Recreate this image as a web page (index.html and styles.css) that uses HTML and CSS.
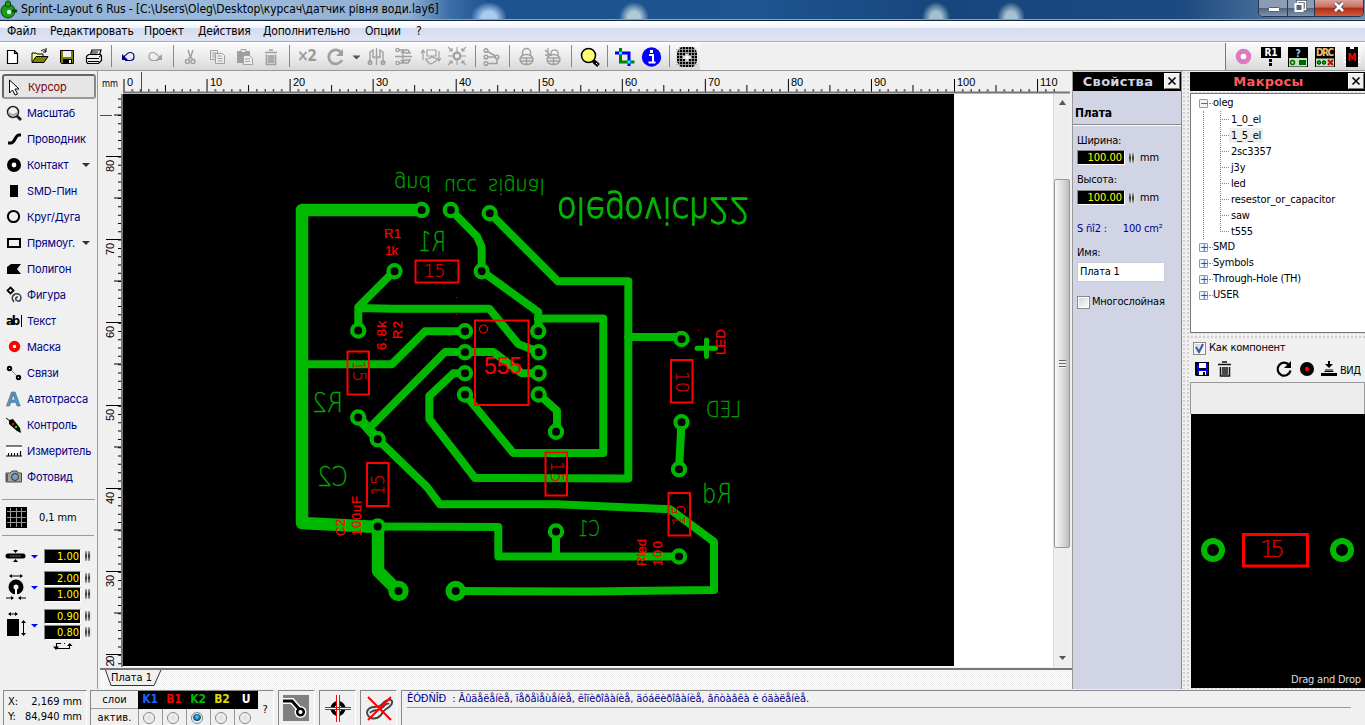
FILE: index.html
```html
<!DOCTYPE html>
<html lang="ru">
<head>
<meta charset="utf-8">
<title>Sprint-Layout 6 Rus</title>
<link rel="stylesheet" href="styles.css">
</head>
<body>
<div class="app">
  <header class="titlebar">
    <svg class="appicon" width="18" height="19" viewBox="0 0 18 19"><circle cx="8" cy="11" r="7" fill="#1c9a1c" stroke="#064806"/><rect x="5.500" y="1" width="5" height="6" rx="2" fill="#1c9a1c" stroke="#064806"/><circle cx="9" cy="12" r="2.200" fill="#dff5df"/><path d="M12 11h5" stroke="#064806" stroke-width="3"/></svg>
    <span class="title">Sprint-Layout 6 Rus - [C:\Users\Oleg\Desktop\курсач\датчик рівня води.lay6]</span>
    <div class="winbtns">
      <div class="wb min"><svg width="28" height="16"><rect x="9.500" y="7.500" width="11" height="4" rx="1" fill="#fff" stroke="#56606e"/></svg></div>
      <div class="wb max"><svg width="26" height="16"><rect x="9.500" y="1.500" width="8" height="8" fill="none" stroke="#4b5566" stroke-width="3"/><rect x="9.500" y="1.500" width="8" height="8" fill="none" stroke="#fff" stroke-width="1.500"/><rect x="7.500" y="4" width="7" height="7" fill="#56647a" stroke="#fff" stroke-width="2"/></svg></div>
      <div class="wb close"><svg width="48" height="16"><path d="M20 3l8 8M28 3l-8 8" stroke="#47404a" stroke-width="4.500"/><path d="M20 3l8 8M28 3l-8 8" stroke="#fff" stroke-width="2.600"/></svg></div>
    </div>
  </header>
  <nav class="menubar">
    <span class="m1">Файл</span><span class="m2">Редактировать</span><span class="m3">Проект</span><span class="m4">Действия</span><span class="m5">Дополнительно</span><span class="m6">Опции</span><span class="m7">?</span>
  </nav>
  <div class="toolbar">
    <div class="tools-a">
      <svg class="ic" viewBox="0 0 27 27"><path d="M8.500 7.500h7l3 3v10h-10zM15.500 7.500v3h3" fill="#fff" stroke="#000" stroke-width="1.200"/></svg>
      <svg class="ic" viewBox="0 0 27 27"><path d="M6 19V10h4l1 1h6v3" fill="#ffff80" stroke="#000"/><path d="M6 19.500l4-6h12l-4 6z" fill="#808000" stroke="#000"/><path d="M15 8q3-3 5 0m0-3v4h-3" fill="none" stroke="#000"/></svg>
      <svg class="ic" viewBox="0 0 27 27"><path d="M7.500 7.500h13v13h-12l-1-1z" fill="#808000" stroke="#000"/><rect x="10" y="8" width="8" height="6" fill="#eee"/><rect x="10" y="16" width="9" height="5"/><rect x="16" y="17" width="2" height="3" fill="#eee"/></svg>
      <svg class="ic" viewBox="0 0 27 27"><path d="M10 13l2-6h9l-2 6" fill="#fff" stroke="#000" stroke-width="1.200"/><path d="M6.500 13.500l2-2h12l1 2v4l-3 3h-11l-1-2z" fill="#eee" stroke="#000" stroke-width="1.200"/><path d="M7 15.500h12M8 18.500h11M12 9h6M11.500 11h6M19 14l3-2" stroke="#000"/></svg>
      <i class="sep"></i>
      <svg class="ic" viewBox="0 0 27 27"><path d="M11 18h5q4 0 4-4t-4-4q-2 0-7 5" fill="none" stroke="#000080" stroke-width="1.200" transform="translate(-1 -.5)"/><path d="M7 11v6h6z" fill="#000080"/></svg>
      <svg class="ic dis" viewBox="0 0 27 27"><path d="M16 17.500h-5q-4 0-4-4t4-4q2 0 7 5" fill="none" stroke="currentColor" stroke-width="1.200"/><path d="M20 11v6h-6z" fill="currentColor"/></svg>
      <i class="sep"></i>
      <svg class="ic dis" viewBox="0 0 27 27"><path d="M11 7l2 6 3 4M16 7l-2 6-3 4" fill="none" stroke="currentColor" stroke-width="1.500"/><circle cx="10.500" cy="18.500" r="2" fill="none" stroke="currentColor" stroke-width="1.500"/><circle cx="16" cy="18.500" r="2" fill="none" stroke="currentColor" stroke-width="1.500"/></svg>
      <svg class="ic dis" viewBox="0 0 27 27"><path d="M6.500 7.500h7v9h-7zM8 10h4M8 12h3M8 14h3" fill="#eee" stroke="currentColor"/><path d="M11.500 10.500h7l2 2v8h-9zM13.500 13h4M13.500 15.500h5M13.500 18h5" fill="#eee" stroke="currentColor"/></svg>
      <svg class="ic dis" viewBox="0 0 27 27"><path d="M6 8h13v12H6z" fill="currentColor"/><path d="M10 6.500h5v3h-5z" fill="#eee" stroke="currentColor"/><path d="M12.500 12.500h6l3 3v6h-9zM14 16h5M14 18.500h5" fill="#eee" stroke="currentColor"/></svg>
      <svg class="ic dis" viewBox="0 0 27 27"><path d="M7 9.500h12M11 7h4M8.500 11.500v10h9v-10M11 12v8M13 12v8M15 12v8" fill="none" stroke="currentColor" stroke-width="1.700"/></svg>
      <i class="sep"></i>
      <span class="ic x2">×2</span>
      <svg class="ic rot dis" viewBox="0 0 30 27"><path d="M21.500 10a7 7 0 1 0 .5 7" fill="none" stroke="currentColor" stroke-width="2.800"/><path d="M23 6v7h-7z" fill="currentColor"/></svg>
      <svg class="caret" viewBox="0 0 13 27"><path d="M2.500 12.500h8l-4 4z" fill="#555"/></svg>
      <svg class="ic dis" viewBox="0 0 27 27"><path d="M13.500 5v17M7 20V9l3-2v7l2 1M20 20V9l-3-2v7l-2 1" fill="none" stroke="currentColor" stroke-width="1.400"/><circle cx="7" cy="19.500" r="1.800" fill="none" stroke="currentColor" stroke-width="1.500"/><circle cx="20" cy="19.500" r="1.800" fill="none" stroke="currentColor" stroke-width="1.500"/><path d="M9 14h9" stroke="currentColor"/></svg>
      <svg class="ic dis" viewBox="0 0 27 27"><path d="M5 13.500h17M8 7h10l2 3h-5M8 20h10l2-3h-5M13 8v11M11 10l2-2 2 2M11 17l2 2 2-2" fill="none" stroke="currentColor" stroke-width="1.400"/><circle cx="7.500" cy="7" r="1.600" fill="#eee" stroke="currentColor" stroke-width="1.400"/><circle cx="7.500" cy="20" r="1.600" fill="#eee" stroke="currentColor" stroke-width="1.400"/></svg>
      <svg class="ic dis" viewBox="0 0 27 27"><path d="M6 17V8M4 10l2-3 2 3M10 7h9v6h-9zM8 16h3l4-2 5 2M9 17l4 4 3-1 4-3M22 8v9M20 15l2 3 2-3" fill="none" stroke="currentColor" stroke-width="1.200"/></svg>
      <svg class="ic dis" viewBox="0 0 27 27"><circle cx="13" cy="13" r="3.400" fill="none" stroke="currentColor" stroke-width="2.200"/><path d="M13 4v5M13 17v5M4 13h5M17 13h5M4 4l4 4M22 4l-4 4M4 22l4-4M22 22l-4-4M5 8h3V5M18 5v3h3M5 18h3v3M18 21v-3h3" fill="none" stroke="currentColor" stroke-width="1.100"/></svg>
      <i class="sep s7"></i>
      <svg class="ic dis" viewBox="0 0 27 27"><path d="M8 7.500l11 6.500M8 14h11v6.500H8" fill="none" stroke="currentColor" stroke-width="1.500"/><g fill="#eee" stroke="currentColor" stroke-width="1.500"><circle cx="8" cy="7.500" r="1.800"/><circle cx="8" cy="14" r="1.800"/><circle cx="19" cy="14" r="1.800"/><circle cx="8" cy="20.500" r="1.800"/></g></svg>
      <i class="sep"></i>
      <svg class="ic dis" viewBox="0 0 27 27"><path d="M9.500 13V9.500a4 4 0 0 1 8 0V13" fill="none" stroke="currentColor" stroke-width="1.500"/><ellipse cx="13.500" cy="16.500" rx="6.500" ry="5" fill="none" stroke="currentColor" stroke-width="1.500"/><path d="M7 15h13M8 18h11M13.500 15v6" stroke="currentColor" stroke-width="1.500"/></svg>
      <svg class="ic dis" viewBox="0 0 27 27"><path d="M11 12V9a4 4 0 0 1 7 0v4M5 7l5 5M5 12h7M8 5v10" fill="none" stroke="currentColor" stroke-width="1.300"/><ellipse cx="13.500" cy="16.500" rx="6.500" ry="5" fill="none" stroke="currentColor" stroke-width="1.500"/><path d="M7 15h13M8 18h11M13.500 15v6" stroke="currentColor" stroke-width="1.500"/></svg>
      <i class="sep s9"></i>
      <svg class="ic" viewBox="0 0 27 27"><circle cx="12.500" cy="12.500" r="7" fill="#ffff70" stroke="#000" stroke-width="1.500"/><path d="M17.500 18l5 4.500" stroke="#000" stroke-width="4"/><path d="M20 20l1.500 1.500" stroke="#fff"/></svg>
      <i class="sep"></i>
      <svg class="ic" viewBox="0 0 27 27"><path d="M9 4v14h14" fill="none" stroke="#008000" stroke-width="3" transform="translate(.5 1)"/><path d="M4 10h14v13" fill="none" stroke="#00f" stroke-width="3"/><path d="M8 8.500h3v3H8zM16.500 17.500h3v3h-3z" fill="#0ff"/></svg>
      <svg class="ic" viewBox="0 0 27 27"><circle cx="13.500" cy="14" r="9.700" fill="#00f"/><path d="M11 12h4v7M10.500 19.500h7" fill="none" stroke="#fff" stroke-width="2"/><rect x="12" y="7" width="3" height="3" fill="#fff"/></svg>
      <i class="sep"></i>
      <svg class="ic" viewBox="0 0 27 27"><path d="M8 4h12l4 5v10l-4 5H8l-4-5V9z"/><path d="M3 6.500h21M3 9.500h21M3 12.500h21M3 15.500h21M3 18.500h21M3 21.500h21M6.500 4v20M9.500 4v20M12.500 4v20M15.500 4v20M18.500 4v20M21.500 4v20" stroke="#aaa" stroke-width=".8"/><path d="M10 13h8v3h-8zM12.500 10.500h3v8h-3z" fill="#ddd"/><path d="M12.500 13h3v3h-3z" fill="#fff"/></svg>
    </div>
    <div class="tools-b">
      <svg class="ic" viewBox="0 0 27 27"><circle cx="13.500" cy="13.500" r="5.300" fill="#fff" stroke="#e07ac0" stroke-width="5"/></svg>
      <svg class="ic" viewBox="0 0 27 27"><rect x="4" y="4" width="20" height="11"/><text x="14" y="13" class="badge" fill="#fff">R1</text><path d="M13.500 16v8" stroke="#000" stroke-width="3" stroke-dasharray="3 1"/></svg>
      <svg class="ic" viewBox="0 0 27 27"><rect x="4" y="4" width="20" height="20"/><text x="14" y="13.500" class="badge" fill="#9cf">?</text><rect x="5" y="15" width="18" height="8.500" fill="#bfe3bf"/><circle cx="8.500" cy="19.500" r="2" fill="none" stroke="#060" stroke-width="1.500"/><rect x="15" y="17" width="7" height="5" fill="#060"/></svg>
      <svg class="ic" viewBox="0 0 27 27"><rect x="4" y="4" width="20" height="20"/><text x="14" y="13" class="badge" fill="#ecc070" textLength="18">DRC</text><rect x="5" y="15.500" width="18" height="8" fill="#bfe3bf"/><g fill="#0d0" stroke="#000"><circle cx="8" cy="19.500" r="1.700"/><circle cx="13" cy="19.500" r="1.700"/></g><path d="M17 17l5 5M22 17l-5 5" stroke="#d00" stroke-width="2.200"/></svg>
      <svg class="ic" viewBox="0 0 27 27"><path d="M7 6v17M21 6v17" stroke="#fff" stroke-width="3" stroke-dasharray="2 2"/><rect x="8" y="4" width="12" height="20"/><path d="M12 4h4v2h-4z" fill="#fff"/><text x="14" y="18" class="badge" fill="#f00">M</text></svg>
    </div>
  </div>

  <main class="work">
    <aside class="left">
      <div class="toollist">
        <div class="tool active"><svg viewBox="0 0 24 26"><path d="M7.500 6v13l3-3 2.500 5 2.500-1-2.500-5h4z" fill="#fff" stroke="#000"/></svg><span>Курсор</span></div>
        <div class="tool"><svg viewBox="0 0 24 26"><circle cx="13" cy="12" r="5.500" fill="#eef3f3" stroke="#222" stroke-width="1.500"/><path d="M17 16l4 4" stroke="#222" stroke-width="3"/><path d="M9 13q4 4 8 0" stroke="#aaa" fill="none" stroke-width="2"/></svg><span>Масштаб</span></div>
        <div class="tool"><svg viewBox="0 0 24 26"><path d="M8 17h3q2 0 4-4t4-4h2" fill="none" stroke="#000" stroke-width="3"/></svg><span>Проводник</span></div>
        <div class="tool"><svg viewBox="0 0 24 26"><circle cx="14" cy="13" r="4.700" fill="#fff" stroke="#000" stroke-width="4.600"/></svg><span>Контакт</span><b></b></div>
        <div class="tool"><svg viewBox="0 0 24 26"><path d="M10 7h8v12h-8z"/></svg><span>SMD-Пин</span></div>
        <div class="tool"><svg viewBox="0 0 24 26"><circle cx="13.500" cy="12.500" r="5.600" fill="none" stroke="#000" stroke-width="2"/></svg><span>Круг/Дуга</span></div>
        <div class="tool"><svg viewBox="0 0 24 26"><path d="M8 9h12v8H8z" fill="none" stroke="#000" stroke-width="2"/></svg><span>Прямоуг.</span><b></b></div>
        <div class="tool"><svg viewBox="0 0 24 26"><path d="M7 18V11l4-3h10l-4 5 4 5z"/></svg><span>Полигон</span></div>
        <div class="tool"><svg viewBox="0 0 24 26"><path d="M10.500 5.500l3 3-3 3-3-3z" fill="none" stroke="#000" stroke-width="1.800"/><path d="M14 20q-4-5 1-8 6-1 6 4-1 5-5 2-1-3 2-3" fill="none" stroke="#333b50" stroke-width="1.500"/></svg><span>Фигура</span></div>
        <div class="tool"><svg viewBox="0 0 24 26"><text x="6" y="17" class="ab" textLength="14">ab</text><path d="M21.500 7v12" stroke="#000"/></svg><span>Текст</span></div>
        <div class="tool"><svg viewBox="0 0 24 26"><circle cx="14.500" cy="12.500" r="3.700" fill="#fff" stroke="#f00" stroke-width="4"/></svg><span>Маска</span></div>
        <div class="tool"><svg viewBox="0 0 24 26"><path d="M9 8l10 10" stroke="#888"/><g fill="#fff" stroke="#000" stroke-width="2"><circle cx="9.500" cy="8.500" r="1.700"/><circle cx="18.500" cy="17.500" r="1.700"/></g></svg><span>Связи</span></div>
        <div class="tool"><svg viewBox="0 0 24 26"><text x="6" y="20" class="auto">A</text></svg><span>Автотрасса</span></div>
        <div class="tool"><svg viewBox="0 0 24 26"><path d="M6 6l4 3" stroke="#000"/><path d="M9 8l4-1 7 9 1 5-4-2-8-7z"/><circle cx="13" cy="12" r="1.300" fill="#f00"/><circle cx="16" cy="15" r="1.300" fill="#0d0"/></svg><span>Контроль</span></div>
        <div class="tool"><svg viewBox="0 0 24 26"><path d="M6 8h16v10H6z" fill="#fff"/><path d="M6 8h16M6 18h16M8.500 18v-3M11.500 18v-3M14.500 18v-3M17.500 18v-3M20.500 18v-5" stroke="#000" stroke-width="1.200"/></svg><span>Измеритель</span></div>
        <div class="tool"><svg viewBox="0 0 24 26"><path d="M6 9h4l2-2h5l1 2h3.500v9H6z" fill="#aaa28c" stroke="#48485a"/><circle cx="15" cy="13" r="3.500" fill="#78a0c8" stroke="#333"/><path d="M7 10v7" stroke="#557" stroke-width="2"/></svg><span>Фотовид</span></div>
      </div>
      <div class="gridbox"><svg width="22" height="22" viewBox="0 0 22 22"><rect width="21" height="21"/><path d="M1 4.500h19M1 10.500h19M1 15.500h19M4.500 1v19M10.500 1v19M15.500 1v19" stroke="#999"/></svg><span>0,1 mm</span></div>
      <div class="sizes">
        <div class="size"><svg class="si" viewBox="0 0 36 20"><path d="M7 10h15" stroke="#000" stroke-width="5" stroke-linecap="round"/><path d="M9 10h11" stroke="#444" stroke-width="1.500"/><path d="M12 4h5l-2.500 3zM12 16h5l-2.500-3z"/><path d="M30 9h7l-3.500 3.500z" fill="#00f"/></svg><div><p><em>1.00</em><i></i></p></div></div>
        <div class="size s2"><svg class="si" viewBox="0 0 36 32"><circle cx="15" cy="17" r="5" fill="none" stroke="#000" stroke-width="5"/><path d="M15 19v6" stroke="#fff" stroke-width="2"/><path d="M9 6h12M5 28h7M18 28h7" stroke="#000"/><path d="M8 6l3-2v4zM22 6l-3-2v4zM13 28l-3-2v4zM17 28l3-2v4z"/><path d="M30 16h7l-3.500 3.500z" fill="#00f"/></svg><div><p><em>2.00</em><i></i></p><p><em>1.00</em><i></i></p></div></div>
        <div class="size s3"><svg class="si" viewBox="0 0 36 32"><path d="M6 11h12v17H6z"/><path d="M8 6h8M22.500 14v12" stroke="#000"/><path d="M7 6l3-2v4zM17 6l-3-2v4zM22.500 12l-2.500 3h5zM22.500 28l-2.500-3h5z"/><path d="M30 16h7l-3.500 3.500z" fill="#00f"/></svg><div><p><em>0.90</em><i></i></p><p><em>0.80</em><i></i></p></div></div>
        <svg class="swap" width="20" height="9" viewBox="0 0 20 9"><path d="M8 1.500H3.500V5M3 6.500h13.500V3M12 1.500h-1" fill="none" stroke="#000" stroke-width="1.100" stroke-dasharray="none"/><path d="M0 4.500h6L3 8zM14 4h5.500l-2.700-3z"/></svg>
      </div>
    </aside>

    <section class="editor">
      <svg class="hruler" width="970" height="22" viewBox="100 72 970 22">
        <defs>
          <pattern id="ht" x="123.500" y="0" width="83.050" height="200" patternUnits="userSpaceOnUse"><path d="M.5 79v14M42 85v8M8.800 89v4M17.100 89v4M25.400 89v4M33.700 89v4M50.300 89v4M58.600 89v4M66.900 89v4M75.200 89v4" stroke="#000"/></pattern>
          <pattern id="vt" x="0" y="156" width="200" height="83.050" patternUnits="userSpaceOnUse"><path d="M106 .5h15M114 42h7M118 8.800h3M118 17.100h3M118 25.400h3M118 33.700h3M118 50.300h3M118 58.600h3M118 66.900h3M118 75.200h3" stroke="#000"/></pattern>
        </defs>
        <rect x="123" y="72" width="934" height="22" fill="url(#ht)"/>
        <path d="M123 92.500h947" stroke="#777" stroke-width="2"/><path class="cursor" d="M141.500 72v20"/>
        <text x="102" y="87" class="tah" textLength="16" lengthAdjust="spacingAndGlyphs">mm</text>
        <g class="rul"><text x="127" y="86">0</text><text x="210" y="86">10</text><text x="293" y="86">20</text><text x="376" y="86">30</text><text x="459" y="86">40</text><text x="542" y="86">50</text><text x="625" y="86">60</text><text x="708" y="86">70</text><text x="791" y="86">80</text><text x="874" y="86">90</text><text x="957" y="86">100</text><text x="1040" y="86">110</text></g>
      </svg>
      <div class="mid">
        <svg class="vruler" width="23" height="573" viewBox="100 94 23 573">
          <path d="M106 156.500h15M106 239.500h15M106 322.500h15M106 405.500h15M106 488.500h15M106 571.500h15M106 654.500h15M114 115h7M114 198h7M114 281h7M114 364h7M114 447h7M114 530h7M114 613h7" stroke="#000"/>
          <path d="M119.500 98.400V666" stroke="#000" stroke-width="3" stroke-dasharray="1 7.305"/><path d="M122 93v574" stroke="#777" stroke-width="2"/><path class="cursor" d="M100 115.500h12"/>
          <g class="rul"><text transform="translate(114 172) rotate(-90)">80</text><text transform="translate(114 255) rotate(-90)">70</text><text transform="translate(114 338) rotate(-90)">60</text><text transform="translate(114 421) rotate(-90)">50</text><text transform="translate(114 504) rotate(-90)">40</text><text transform="translate(114 587) rotate(-90)">30</text><text transform="translate(114 666.500) rotate(-90)" textLength="11">20</text></g>
        </svg>
        <svg class="pcb" width="930" height="573" viewBox="123 94 930 573">
          <rect x="123" y="94" width="831" height="572"/>
          <g class="tr wide"><path d="M422 210H302V523L378 527V571L398 591"/></g>
          <g class="tr">
            <path d="M451 210L477 236.500 481.600 247V271L538.300 312V331"/>
            <path d="M538 318.500H603.300V453H513.300L465 394.500"/>
            <path d="M489.700 213L558 281.300H628.300V478.500L475 478 429.300 419V396L453.300 373.300H465M628 337H681"/>
            <path d="M394.300 271L358.300 307V330M358.300 308L393 308.700H489.300L518.300 344 538.700 352"/>
            <path d="M302 364.300H391.700L425 331.300H465M538.700 373.300H521.700L493.300 352H445L373.500 424"/>
            <path d="M358.300 417.300L377.700 439.300 426.700 486.700 440 504.300H556.700L670 509.300 714 541.700V590L586.700 591.500 455.700 591"/>
            <path d="M377.700 526.500L498.300 527V556.500H679M556 531.700V556M538.700 394.300L557 410.700V431.700M681.500 422.500L679 469.300"/>
          </g>
          <path class="tr wide2" d="M358.300 417.300L377.700 439.300"/>
          <g class="pads"><circle cx="421.700" cy="210" r="6.100"/><circle cx="450.800" cy="210" r="6.100"/><circle cx="489.700" cy="213.300" r="6.100"/><circle cx="394.500" cy="271.300" r="6.100"/><circle cx="481.600" cy="271.300" r="6.100"/><circle cx="358.200" cy="330.500" r="6.100"/><circle cx="465" cy="331.300" r="6.100"/><circle cx="465" cy="352.300" r="6.100"/><circle cx="465" cy="373.300" r="6.100"/><circle cx="465" cy="394.500" r="6.100"/><circle cx="538.200" cy="331.300" r="6.100"/><circle cx="538.700" cy="352.300" r="6.100"/><circle cx="538.700" cy="373.300" r="6.100"/><circle cx="538.700" cy="394.500" r="6.100"/><circle cx="358.200" cy="417.500" r="6.100"/><circle cx="377.700" cy="439.300" r="6.100"/><circle cx="556" cy="431.800" r="6.100"/><circle cx="377.700" cy="526.500" r="6.100"/><circle cx="556" cy="531.500" r="6.100"/><circle cx="679" cy="556.500" r="6.100"/><circle cx="681.500" cy="339" r="6.100"/><circle cx="681.500" cy="422.300" r="6.100"/><circle cx="679" cy="469.300" r="6.100"/></g>
          <g class="pads big"><circle cx="398.500" cy="591" r="7.100"/><circle cx="455.700" cy="591" r="7.100"/></g>
          <path class="plus" d="M697 348.300H715.500M706.500 340V356.500"/>
          <g class="thin green">
            <text transform="translate(394 176) scale(1 -1)" font-size="22" textLength="37" lengthAdjust="spacingAndGlyphs">gnd</text>
            <text transform="translate(444 178.500) scale(1 -1)" font-size="22" textLength="33" lengthAdjust="spacingAndGlyphs">ucc</text>
            <text transform="translate(488 179) scale(1 -1)" font-size="22" textLength="57" lengthAdjust="spacingAndGlyphs">signal</text>
            <text transform="translate(446 251) scale(-1 1)" font-size="26" textLength="28" lengthAdjust="spacingAndGlyphs">R1</text>
            <text transform="translate(343 412) scale(-1 1)" font-size="26" textLength="31" lengthAdjust="spacingAndGlyphs">R2</text>
            <text transform="translate(348 486) scale(-1 1)" font-size="26" textLength="31" lengthAdjust="spacingAndGlyphs">C2</text>
            <text transform="translate(741 417) scale(-1 1)" font-size="21" textLength="35" lengthAdjust="spacingAndGlyphs">LED</text>
            <text transform="translate(732 503) scale(-1 1)" font-size="26" textLength="30" lengthAdjust="spacingAndGlyphs">Rd</text>
            <text transform="translate(600 536) scale(-1 1)" font-size="21" textLength="22" lengthAdjust="spacingAndGlyphs">C1</text>
            <text class="name" transform="translate(557 198) scale(1 -1)" font-size="36" textLength="193" lengthAdjust="spacingAndGlyphs">olegovich22</text>
          </g>
          <g class="parts">
            <rect x="415.500" y="260.500" width="43" height="22"/><rect x="347.500" y="351.500" width="21.500" height="43"/><rect x="367" y="463" width="21.500" height="43"/><rect x="545.500" y="452.500" width="21.500" height="43"/><rect x="668.500" y="493" width="21.500" height="42.500"/><rect x="671" y="360" width="21.500" height="42.500"/><rect x="475" y="320.500" width="53.500" height="84.500"/>
            <circle cx="483.500" cy="329" r="4" stroke-width="1.200"/>
          </g>
          <g class="thin red" font-size="17">
            <text transform="translate(434.500 277)">15</text><text transform="translate(353 371) rotate(90)">15</text><text transform="translate(383.500 485) rotate(-90)">15</text><text transform="translate(551 472) rotate(90)">15</text><text transform="translate(685 515) rotate(-90)">15</text><text transform="translate(676 382) rotate(90)">10</text>
          </g>
          <text x="484" y="374" class="redtext chip" textLength="38" lengthAdjust="spacingAndGlyphs">555</text>
          <g class="redtext"><text x="384" y="238" textLength="17">R1</text><text x="385" y="255" textLength="13">1k</text><text transform="translate(386 350) rotate(-90)" textLength="29">6.8k</text><text transform="translate(402 339) rotate(-90)" textLength="18">R2</text><text transform="translate(345 536) rotate(-90)" textLength="17">C2</text><text transform="translate(361 536) rotate(-90)" textLength="40">100uF</text><text transform="translate(646 566) rotate(-90)" textLength="27">Rled</text><text transform="translate(662 566) rotate(-90)" textLength="25">100</text><text transform="translate(725 355) rotate(-90)" textLength="26">LED</text></g>
          <path d="M456 297h1v1h-1zM456 314h1v1h-1zM698 330h1v1h-1z" fill="#f00"/>
        </svg>
        <div class="vscroll"><svg width="16" height="16"><path d="M5 11h7l-3.500-5z" fill="#555"/></svg><div class="thumb"><i></i></div><svg width="16" height="16"><path d="M5 5h7l-3.500 4z" fill="#555"/></svg></div>
      </div>
      <div class="tabs"><svg width="62" height="19" viewBox="0 0 62 19"><path d="M1.500 0l5.500 15.500h43L57 0" fill="#f0f0f0" stroke="#333"/><text x="7" y="11" class="tah" textLength="41">Плата 1</text></svg></div>
    </section>

    <section class="props">
      <div class="phead"><span>Свойства</span><u><svg width="14" height="14" viewBox="0 0 14 14"><path d="M3.500 3.500l7 7M10.500 3.500l-7 7" stroke="#000" stroke-width="1.600"/></svg></u></div>
      <h3>Плата</h3>
      <div class="pbody">
        <label>Ширина:</label>
        <p class="field"><em>100.00</em><i></i><span>mm</span></p>
        <label class="l2">Высота:</label>
        <p class="field"><em>100.00</em><i></i><span>mm</span></p>
        <p class="area"><span>S ñî2 :</span><span>100 cm²</span></p>
        <label class="l3">Имя:</label>
        <div class="input">Плата 1</div>
        <p class="check"><s></s>Многослойная</p>
      </div>
    </section>

    <section class="macros">
      <div class="phead pink"><span>Макросы</span><u><svg width="14" height="14" viewBox="0 0 14 14"><path d="M3.500 3.500l7 7M10.500 3.500l-7 7" stroke="#000" stroke-width="1.600"/></svg></u></div>
      <div class="tree">
        <div class="node"><k>−</k><span>oleg</span></div>
        <div class="leaves"><div><span>1_0_el</span></div><div><span class="sel">1_5_el</span></div><div><span>2sc3357</span></div><div><span>j3y</span></div><div><span>led</span></div><div><span class="long">resestor_or_capacitor</span></div><div><span>saw</span></div><div><span>t555</span></div></div>
        <div class="node"><k>+</k><span>SMD</span></div>
        <div class="node"><k>+</k><span>Symbols</span></div>
        <div class="node"><k>+</k><span>Through-Hole (TH)</span></div>
        <div class="node"><k>+</k><span>USER</span></div>
      </div>
      <div class="split"></div>
      <p class="check comp"><s class="on"><svg width="11" height="11"><path d="M2 4l3 5 4-8" fill="none" stroke="#3c55a5" stroke-width="2"/></svg></s>Как компонент</p>
      <div class="mtools">
        <svg width="174" height="26" viewBox="1190 356 174 26"><path d="M1195 362h14v14h-13l-1-1z"/><path d="M1197 364h2v6h7v-6h2v10h-11z" fill="#00f"/><path d="M1199 363h7v5h-7zM1199 371h7v4h-7z" fill="#fff"/><path d="M1203 372h2v3h-2z"/><path d="M1218 364.500h13M1222 362h5M1220.500 367v9h9v-9M1223 367v8M1225 367v8M1227 367v8" fill="none" stroke="#111" stroke-width="1.500"/><path d="M1289.500 365.500a6.500 6.500 0 1 0 1 5" fill="none" stroke="#000" stroke-width="2.200"/><path d="M1291 361v7h-7z"/><circle cx="1307" cy="369" r="7"/><circle cx="1307" cy="369" r="2.200" fill="#f00"/><path d="M1321 373h16v3h-16zM1325 369.500h8v1h-8zM1328 361h2v3h3l-4 4-4-4h3z"/><path d="M1324.500 371.500h9" stroke="#000"/><text x="1340" y="374" class="tah" textLength="21">ВИД</text></svg>
      </div>
      <div class="blank"></div>
      <svg class="preview" width="174" height="274" viewBox="1191 414 174 274"><rect x="1191" y="414" width="174" height="274"/><g class="pads big2"><circle cx="1213" cy="550" r="9"/><circle cx="1342" cy="550" r="9"/></g><rect x="1243.500" y="534.500" width="64" height="31.500" fill="none" stroke="#f00" stroke-width="3"/><text class="thin red" x="1272.500" y="557" font-size="23" textLength="25">15</text><text x="1291" y="683" class="tah" fill="#ddd" textLength="70">Drag and Drop</text></svg>
    </section>
  </main>

  <footer class="status">
    <div class="coords"><p><span>X:</span><span>2,169 mm</span></p><p><span>Y:</span><span>84,940 mm</span></p></div>
    <div class="layers">
      <div class="lab"><span>слои</span><span>актив.</span></div>
      <div class="layer c1"><b>K1</b><span><o></o></span></div><div class="layer c2"><b>B1</b><span><o></o></span></div><div class="layer c3"><b>K2</b><span><o class="on"></o></span></div><div class="layer c4"><b>B2</b><span><o></o></span></div><div class="layer c5"><b>U</b><span><o></o></span></div>
      <div class="help">?</div>
    </div>
    <div class="sbtn"><svg width="26" height="26" viewBox="0 0 26 26"><rect width="26" height="26" fill="#808080"/><path d="M0 6h9l8 9" fill="none" stroke="#fff" stroke-width="6"/><circle cx="17.500" cy="17" r="6" fill="#fff"/><path d="M0 6h9l8 9" fill="none" stroke="#000" stroke-width="3"/><circle cx="17.500" cy="17" r="3.300" fill="#fff" stroke="#000" stroke-width="2.500"/></svg></div>
    <div class="sbtn"><svg width="28" height="28" viewBox="0 0 28 28"><circle cx="14" cy="13.500" r="5.500" fill="none" stroke="#000" stroke-width="4"/><path d="M14 0v27M1 13.500h27" stroke="#fff" stroke-width="2"/><path d="M12.500 0v27M15.500 0v27M1 12.500h26M1 14.500h26" stroke="#f00"/></svg></div>
    <div class="sbtn"><svg width="28" height="28" viewBox="0 0 28 28"><path d="M2 17q1-5 8-5 5 0 9-5 6-4 8-1 1 4-6 8-3 2-5 6-5 5-10 3-4-2-4-6zM5 18q1-2 7-3 5-1 8-5 3-2 4-1" fill="none" stroke="#444" stroke-width="1.900"/><path d="M3 2l23 23M26 2L3 25" stroke="#f00" stroke-width="2"/></svg></div>
    <div class="hint"><p>ÊÓÐÑÎÐ&nbsp; : Âûäåëåíèå, ïåðåìåùåíèå, êîïèðîâàíèå, äóáëèðîâàíèå, âñòàâêà è óäàëåíèå.</p></div>
  </footer>
</div>
</body>
</html>
```
FILE: styles.css
```css
* { box-sizing: border-box; }
body { margin: 0; overflow: hidden; }
p, h3 { margin: 0; }
.app { width: 1365px; height: 725px; display: flex; flex-direction: column; background: #f0f0f0; font: 11px/14px "DejaVu Sans Condensed", "DejaVu Sans", sans-serif; color: #000; white-space: nowrap; letter-spacing: -0.2px; overflow: hidden; }
svg { display: block; flex: none; letter-spacing: 0; }

.titlebar { height: 21px; flex: none; display: flex; border-bottom: 1px solid #10263e; box-shadow: inset 0 -1px #7fa3cb; padding-right: 1px;
  background: radial-gradient(ellipse 18px 16px at 489px 18px, #a9cbf0 40%, transparent), radial-gradient(ellipse 15px 16px at 634px 18px, #aecbd5 40%, transparent), radial-gradient(ellipse 14px 16px at 936px 18px, #a5c0cf 40%, transparent), radial-gradient(ellipse 14px 16px at 1011px 18px, #a5c0cf 40%, transparent), linear-gradient(90deg, #8fb0d4 0, #9dbadb 250px, #8eaed2 410px, #3c6da6 450px, #1c528f 490px, #1e5490 760px, #17467c 940px, #1b4a80 1180px, #53779f 1290px, #6f8fb0); }
.title { font-size: 12px; line-height: 19px; margin-left: 3px; width: 420px; letter-spacing: -0.08px; }
.winbtns { margin-left: auto; height: 17px; display: flex; border: 1px solid #26384e; border-top: 0; border-radius: 0 0 5px 5px; overflow: hidden; }
.wb { height: 16px; border-right: 1px solid #26384e; background: linear-gradient(#8b9db2 50%, #4d627c 50%, #8094ac); }
.wb.close { border: 0; background: linear-gradient(#d8a196, #c8705e 45%, #b02c14 50%, #cf5b3e); }

.menubar { height: 21px; flex: none; display: flex; padding-left: 7px; font-size: 12px; line-height: 20px; background: linear-gradient(#fff, #f1f3fa 35%, #d5dcee 36%, #dfe5f5); border-bottom: 1px solid #aaa; }
.m1 { width: 43px; } .m2 { width: 94px; } .m3 { width: 54px; } .m4 { width: 65px; } .m5 { width: 102px; } .m6 { width: 51px; }

.toolbar { height: 29px; flex: none; display: flex; border-top: 1px solid #fff; border-bottom: 1px solid #999; background: #f0f0f0; }
.tools-a, .tools-b { display: flex; height: 27px; background: linear-gradient(#fafafa, #ececec 50%, #d8d8d8); }
.tools-a { width: 701px; margin-left: -1px; }
.tools-b { margin-left: auto; width: 140px; border-left: 1px solid #777; padding-left: 4px; }
.ic { width: 27px; height: 27px; flex: none; overflow: visible; }
.rot { width: 30px; }
.caret { width: 13px; height: 27px; }
.dis { color: #a0a0a0; }
.x2 { color: #999; font: bold 15px/27px "DejaVu Sans Condensed", sans-serif; text-align: center; letter-spacing: -1px; }
.sep { width: 8px; height: 22px; margin-top: 2px; flex: none; background: linear-gradient(90deg, transparent 4px, #888 4px, #888 5px, transparent 5px); }
.s7 { width: 7px; } .s9 { width: 9px; }
.badge { font: bold 10px "DejaVu Sans Condensed", sans-serif; text-anchor: middle; }

.work { height: 618px; flex: none; display: flex; }
.left { width: 98px; flex: none; border-right: 1px solid #999; padding: 3px 0 0 2px; }
.toollist { width: 93px; padding-bottom: 8px; border-bottom: 1px solid #999; height: 426px; }
.tool { height: 26px; display: flex; align-items: center; color: #000080; font: 11px/26px Inter, "Noto Sans", sans-serif; letter-spacing: -0.15px; }
.tool svg { width: 24px; height: 26px; margin-right: 1px; margin-left: -2px; overflow: visible; }
.tool span { margin-left: 2px; }
.tool.active { width: 94px; height: 25px; margin-bottom: 1px; border: 2px solid #777; border-color: #666 #888 #999 #666; border-radius: 3px; background: #e6e6e6; color: #800000; }
.tool.active span { margin-left: 1px; }
.tool b { border: 4px solid transparent; border-top-color: #333; border-bottom: 0; margin-left: auto; margin-right: 5px; }
.ab { font: bold 13px "DejaVu Sans Condensed", sans-serif; }
.auto { font: bold 20px "Liberation Sans", sans-serif; fill: #5d9bc8; stroke: #3d6685; stroke-width: .7px; }
.gridbox { height: 36px; width: 92px; display: flex; align-items: center; border-bottom: 1px solid #999; padding-left: 4px; }
.gridbox span { margin-left: 11px; letter-spacing: -.1px; }
.sizes { padding-top: 10px; }
.size { display: flex; height: 20px; align-items: center; }
.si { width: 36px; height: 20px; margin-left: -1px; margin-right: 7px; overflow: visible; }
.s2, .s3 { height: 32px; margin-top: 4px; }
.s3 { margin-top: 6px; }
.s2 .si, .s3 .si { height: 32px; }
.size p { display: flex; height: 16px; align-items: center; }
.size em, .field em { width: 37px; height: 15px; background: #000; color: #ff0; border: 1px solid #aaa; border-color: #888 #fff #fff #888; font: 11px/13px "DejaVu Sans Condensed", sans-serif; text-align: right; padding-right: 1px; letter-spacing: 0; }
.size i, .field i { width: 6px; height: 10px; margin-left: 4px; background: linear-gradient(#f0f0f0aa, transparent 50%, #f0f0f0aa), linear-gradient(90deg, #333 2px, #ddd 2px, #ddd 3px, #333 3px, #333 5px, #ddd 5px); }
.swap { margin: 2px 0 0 51px; }

.editor { width: 975px; flex: none; padding: 1px 0 0 2px; display: flex; flex-direction: column; border-right: 1px solid #999; }
.tah { font: 11px "DejaVu Sans Condensed", sans-serif; }
.rul { font: 11px "Liberation Sans", sans-serif; }
.cursor { stroke: #f00; stroke-width: 1px; fill: none; }
.mid { display: flex; height: 573px; }
.pcb { background: #fff; }
.vscroll { width: 17px; height: 573px; background: #eee; border-left: 1px solid #ddd; display: flex; flex-direction: column; }
.thumb { margin-top: 69px; margin-bottom: auto; height: 369px; border: 1px solid #999; border-radius: 2px; background: linear-gradient(90deg, #f7f7f7, #dedede 50%, #bcbcbc); display: flex; align-items: center; justify-content: center; }
.thumb i { width: 7px; height: 8px; background: repeating-linear-gradient(#666 0 1px, #eee 1px 3px); }
.tabs { height: 21px; border-top: 2px solid #777; background: repeating-conic-gradient(#fff 0 25%, #eee 0 50%) 0 0 / 2px 2px; padding-left: 4px; margin-top: 1px; }
.tr { fill: none; stroke: #00b800; stroke-width: 8; stroke-linejoin: round; stroke-linecap: round; }
.wide { stroke-width: 12.500; } .wide2 { stroke-width: 10; }
.pads { fill: #000; stroke: #00b800; stroke-width: 4.200; }
.big { stroke-width: 6.200; } .big2 { stroke-width: 6; }
.plus { stroke: #00b800; stroke-width: 5; stroke-linecap: round; }
.thin { font-family: "DejaVu Sans Light", "DejaVu Sans", sans-serif; font-weight: 200; }
.green { fill: #00a800; stroke: #00a800; stroke-width: .3px; }
.name { fill: #00b800; stroke: #00b800; stroke-width: 1.300px; }
.red { fill: #e00000; stroke: #e00000; stroke-width: .2px; text-anchor: middle; }
.parts { fill: none; stroke: #f00; stroke-width: 2; }
.redtext { fill: #f00; font: 13px "Liberation Sans", sans-serif; stroke: #f00; stroke-width: .25px; }
.chip { font-size: 23px; stroke-width: 0; }

.phead { height: 19px; display: flex; background: #000; color: #d0d4e4; font: bold 13px/19px "DejaVu Sans", sans-serif; letter-spacing: .3px; flex: none; }
.phead span { flex: 1; text-align: center; }
.phead.pink { color: #ff5a5a; }
.phead u { width: 16px; height: 16px; margin: 1px; background: #f0f0f0; border: 1px solid #fff; border-color: #fff #777 #777 #fff; }
.props { width: 109px; flex: none; background: #d0d4e4; border-right: 1px solid #888; padding-top: 1px; }
.props h3 { font: bold 12px/15px "DejaVu Sans Condensed", sans-serif; height: 34px; padding: 15px 0 0 2px; border-bottom: 1px solid #888; box-shadow: 0 1px #fff; }
.pbody { padding: 9px 0 0 4px; }
.pbody label { display: block; height: 16px; }
.field { display: flex; height: 15px; align-items: center; }
.field em { width: 48px; height: 15px; padding-right: 2px; }
.field i { margin-right: 5px; }
.pbody .l2 { margin-top: 8px; margin-bottom: 1px; }
.area { color: #000090; margin-top: 17px; display: flex; gap: 16px; }
.pbody .l3 { margin-top: 10px; }
.input { width: 88px; height: 20px; background: #fff; border: 1px solid #c6cbd8; padding: 2px 2px; }
.check { display: flex; align-items: center; height: 14px; gap: 2px; margin-top: 13px; }
.check s { width: 13px; height: 13px; background: linear-gradient(135deg, #ccd0d5, #fff); border: 1px solid #888; box-shadow: inset 0 0 0 1px #fff; display: block; }

.macros { width: 183px; flex: none; padding: 1px 0 0 8px; display: flex; flex-direction: column; background: radial-gradient(circle, #aaa 0.6px, transparent 0.8px) 0 0 / 4px 4px; }
.tree { height: 240px; margin-top: 2px; padding: 1px 0 0 8px; border: 1px solid #777; border-right: 0; background: #fff; flex: none; }
.node, .leaves div { height: 16px; display: flex; align-items: center; }
k { width: 9px; height: 9px; border: 1px solid #999; border-radius: 1px; font: 10px/7px "DejaVu Sans", sans-serif; text-align: center; color: #2e4a9a; margin-right: 5px; letter-spacing: 0; position: relative; background: #f6f6f6; }
k::after { content: ""; position: absolute; left: 9px; top: 3px; width: 4px; border-top: 1px dotted #888; }
.leaves { border-left: 1px dotted #888; margin-left: 4px; height: 128px; padding-left: 16px; }
.leaves div { background: repeating-linear-gradient(#888 0 1px, transparent 1px 2px) 0 0 / 1px 16px no-repeat; }
.leaves div:last-child { background-size: 1px 8px; }
.leaves div::before { content: ""; width: 9px; border-top: 1px dotted #888; }
.leaves span { padding: 0 2px; line-height: 15px; }
.leaves .long { letter-spacing: -0.1px; }
.sel { background: #eee; }
.split { height: 7px; flex: none; }
.comp { margin: 0; padding-left: 3px; background: #f0f0f0; height: 16px; gap: 3px; }
.mtools { background: #f0f0f0; height: 26px; }
.blank { height: 32px; border: 1px solid #999; border-bottom: 0; background: #ececec; flex: none; }
.preview { margin-left: 1px; }

.status { height: 37px; flex: none; display: flex; gap: 4px; padding: 1px 0 0 3px; }
.coords { width: 84px; padding-top: 4px; border-top: 1px solid #888; border-left: 1px solid #888; border-right: 1px solid #fff; }
.coords p { display: flex; justify-content: space-between; height: 15px; padding: 0 4px; letter-spacing: 0; }
.layers { width: 184px; margin-left: -1px; display: flex; border-top: 1px solid #888; border-left: 1px solid #888; border-right: 1px solid #fff; }
.lab { width: 47px; display: flex; flex-direction: column; text-align: center; letter-spacing: .1px; line-height: 17px; }
.lab span { height: 18px; border-bottom: 1px solid #999; }
.layer { width: 24px; text-align: center; }
.layer b { display: block; height: 18px; background: #000; font: bold 12px/17px "DejaVu Sans Condensed", sans-serif; }
.layer span { display: flex; height: 19px; justify-content: center; align-items: center; border-left: 1px solid #999; padding-right: 4px; padding-bottom: 1px; }
o { width: 12px; height: 12px; flex: none; border: 1px solid #888; border-radius: 50%; background: radial-gradient(#ddd, #fff); box-shadow: inset 0 0 0 1px #eee; }
o.on { background: radial-gradient(circle at 50% 40%, #6cd0f5, #084f86 45%, #fff 60%); }
.c1 b { color: #1c62ff; } .c2 b { color: #f00; } .c3 b { color: #00b800; } .c4 b { color: #dede00; } .c5 b { color: #fff; }
.help { width: 14px; text-align: center; line-height: 38px; }
.sbtn { width: 37px; border-top: 1px solid #888; border-left: 1px solid #888; border-right: 1px solid #fff; padding: 4px 0 0 4px; }
.hint { flex: 1; border-top: 1px solid #888; border-left: 1px solid #888; padding-left: 5px; color: #000090; }
.hint p { border-bottom: 1px solid #999; height: 17px; line-height: 15px; margin-right: 14px; letter-spacing: -0.1px; }
```
